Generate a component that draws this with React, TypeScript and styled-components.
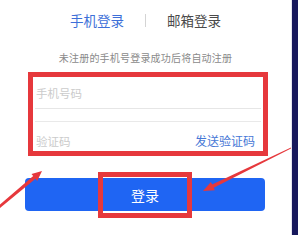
import React from "react";
import styled, { createGlobalStyle } from "styled-components";

const Global = createGlobalStyle`
  html, body { margin: 0; padding: 0; background: #fff; }
  body { font-family: "Noto Sans CJK SC", "Noto Sans", sans-serif; }
`;

const RED = "#e6383c";

const Page = styled.div`
  display: flex;
  width: 298px;
  height: 235px;
  overflow: hidden;
`;

const Card = styled.div`
  position: relative;
  width: 291px;
  height: 235px;
  background: #fff;
  display: flex;
  flex-direction: column;
`;

const Edge = styled.div`
  width: 1px;
  background: #e4e4ee;
`;

const Navy = styled.div`
  flex: 1;
  background: #17185c;
`;

const Tabs = styled.div`
  display: flex;
  justify-content: center;
  align-items: center;
  gap: 21px;
  margin-top: 10px;
  height: 20px;
`;

const Tab = styled.span<{ $active?: boolean }>`
  font-size: 13.5px;
  line-height: 20px;
  color: ${(p) => (p.$active ? "#3d6fd8" : "#4a4a4a")};
`;

const TabDivider = styled.span`
  width: 1px;
  height: 13px;
  background: #d4d4d4;
`;

const Hint = styled.div`
  margin-top: 21px;
  text-align: center;
  font-size: 10px;
  letter-spacing: 0.2px;
  line-height: 14px;
  color: #8a8a8a;
`;

const Form = styled.div`
  box-sizing: border-box;
  margin: 7px 0 0 28px;
  width: 240px;
  height: 84px;
  border: 5px solid ${RED};
  display: flex;
  flex-direction: column;
`;

const PhoneRow = styled.div`
  display: flex;
  align-items: center;
  height: 32px;
  margin: 0 2px;
  border-bottom: 1px solid #e6e6e6;
`;

const CodeRow = styled.div`
  display: flex;
  align-items: flex-end;
  justify-content: space-between;
  height: 27px;
  margin: 12px 2px 0;
  padding-bottom: 2px;
  border-top: 1px solid #e9e9e9;
`;

const Field = styled.input`
  flex: 1;
  min-width: 0;
  border: none;
  outline: none;
  background: transparent;
  padding: 0 0 0 1px;
  font-family: inherit;
  font-size: 11.5px;
  line-height: 16px;
  color: #333;
  &::placeholder { color: #cbcbcb; }
`;

const SendCode = styled.span`
  font-size: 12px;
  line-height: 16px;
  color: #4677d6;
  margin-right: 6px;
  white-space: nowrap;
`;

const ButtonWrap = styled.div`
  position: relative;
  margin: 22px 0 0 25px;
  width: 240px;
`;

const LoginButton = styled.button`
  display: block;
  width: 240px;
  height: 33px;
  border: none;
  border-radius: 4px;
  background: #1f65f3;
  color: #fff;
  font-family: inherit;
  font-size: 14px;
  padding: 0;
  padding-top: 1px;
`;

const Highlight = styled.div`
  position: absolute;
  left: 73px;
  top: -6px;
  width: 94px;
  height: 46px;
  box-sizing: border-box;
  border: 5px solid ${RED};
  pointer-events: none;
`;

const Overlay = styled.svg`
  position: absolute;
  inset: 0;
  pointer-events: none;
`;

type Pt = [number, number];

function arrowPoints(t: Pt, h: Pt, w0: number, w1: number, len: number, wid: number) {
  const dx = h[0] - t[0];
  const dy = h[1] - t[1];
  const d = Math.hypot(dx, dy);
  const ux = dx / d;
  const uy = dy / d;
  const nx = -uy;
  const ny = ux;
  const b: Pt = [h[0] - ux * len, h[1] - uy * len];
  const p = (o: Pt, s: number): string => `${(o[0] + nx * s).toFixed(1)},${(o[1] + ny * s).toFixed(1)}`;
  return [p(t, w0 / 2), p(b, w1 / 2), p(b, wid / 2), `${h[0]},${h[1]}`, p(b, -wid / 2), p(b, -w1 / 2), p(t, -w0 / 2)].join(" ");
}

export default function App() {
  return (
    <Page>
      <Global />
      <Card>
        <Tabs>
          <Tab $active>手机登录</Tab>
          <TabDivider />
          <Tab>邮箱登录</Tab>
        </Tabs>
        <Hint>未注册的手机号登录成功后将自动注册</Hint>
        <Form>
          <PhoneRow>
            <Field placeholder="手机号码" />
          </PhoneRow>
          <CodeRow>
            <Field placeholder="验证码" />
            <SendCode>发送验证码</SendCode>
          </CodeRow>
        </Form>
        <ButtonWrap>
          <LoginButton>登录</LoginButton>
          <Highlight />
        </ButtonWrap>
        <Overlay width="291" height="235" viewBox="0 0 291 235">
          <polygon fill={RED} points={arrowPoints([-2, 208], [42, 171], 2.5, 3.5, 10, 9)} />
          <polygon fill={RED} points={arrowPoints([293, 147], [203, 191], 1, 3.5, 11, 9)} />
        </Overlay>
      </Card>
      <Edge />
      <Navy />
    </Page>
  );
}
